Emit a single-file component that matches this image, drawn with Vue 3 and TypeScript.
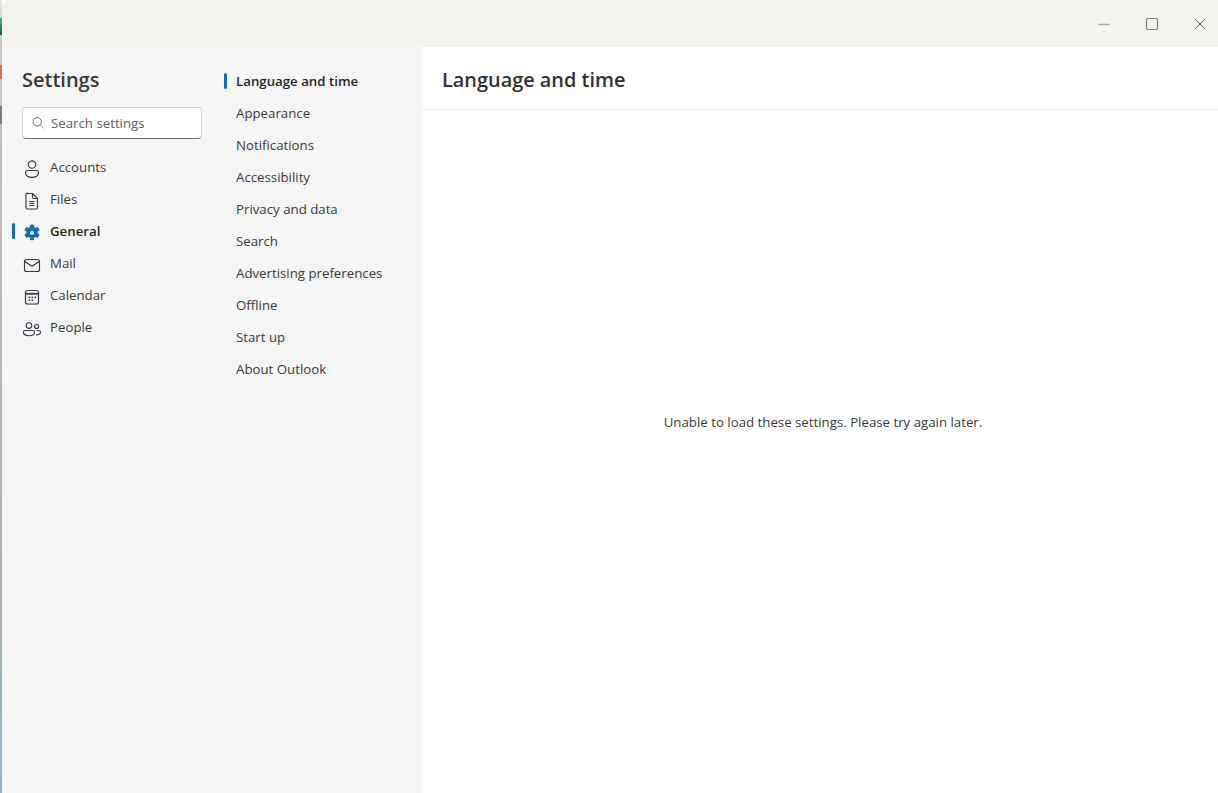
<script setup lang="ts">
interface Item { id: string; label: string }
const accounts: Item[] = [
  { id: 'accounts', label: 'Accounts' },
  { id: 'files', label: 'Files' },
  { id: 'general', label: 'General' },
  { id: 'mail', label: 'Mail' },
  { id: 'calendar', label: 'Calendar' },
  { id: 'people', label: 'People' },
]
const subItems: string[] = [
  'Language and time', 'Appearance', 'Notifications', 'Accessibility', 'Privacy and data',
  'Search', 'Advertising preferences', 'Offline', 'Start up', 'About Outlook',
]
</script>

<template>
  <div class="window">
    <div class="edge">
      <span class="e e1"></span>
      <span class="e e2"></span>
      <span class="e e3"></span>
    </div>
    <div class="frame">
      <header class="titlebar">
        <button class="cap"><svg width="14" height="14" viewBox="0 0 14 14"><path d="M1.500 7.500h11" stroke="#a9a9a9" stroke-width="1.500" fill="none"/></svg></button>
        <button class="cap"><svg width="14" height="14" viewBox="0 0 14 14"><rect x="1.500" y="1.500" width="11" height="11" rx="1.500" stroke="#7d7d7d" stroke-width="1.200" fill="none"/></svg></button>
        <button class="cap"><svg width="14" height="14" viewBox="0 0 14 14"><path d="M2 2l10 10M12 2L2 12" stroke="#6a6a6a" stroke-width="1" fill="none"/></svg></button>
      </header>
      <div class="body">
        <nav class="col1">
          <h1 class="settings">Settings</h1>
          <div class="search">
            <svg width="14" height="14" viewBox="0 0 14 14" class="mag"><circle cx="6.200" cy="5.800" r="4.200" stroke="#6b6b6b" stroke-width="1" fill="none"/><path d="M9.300 8.900l3.400 3.600" stroke="#b98a6a" stroke-width="1" fill="none"/></svg>
            <span>Search settings</span>
          </div>
          <ul class="list1">
            <li v-for="it in accounts" :key="it.id" class="row1" :class="{ active: it.id === 'general' }">
              <span v-if="it.id === 'general'" class="bar1"></span>
              <svg class="ico" width="20" height="20" viewBox="0 0 20 20" fill="none" stroke="#3a3548" stroke-width="1.150">
                <template v-if="it.id === 'accounts'">
                  <circle cx="10" cy="5.500" r="3.700"/>
                  <path d="M5.500 11.500h9a2 2 0 0 1 2 2v.6c0 2.500-3 4.300-6.500 4.300s-6.500-1.800-6.500-4.300v-.6a2 2 0 0 1 2-2z"/>
                </template>
                <template v-else-if="it.id === 'files'">
                  <path d="M5.500 2.500h5l5 5v9a1.500 1.500 0 0 1-1.500 1.500h-8.500a1.500 1.500 0 0 1-1.500-1.500v-13a1.500 1.500 0 0 1 1.500-1.500z"/>
                  <path d="M10.500 2.500v3.500a1.500 1.500 0 0 0 1.500 1.500h3.500M7.500 10.500h5M7.500 12.500h5M7.500 14.500h5"/>
                </template>
                <template v-else-if="it.id === 'general'">
                  <path fill="#0f6cbd" stroke="none" fill-rule="evenodd" d="M8.200 1.800a8.500 8.500 0 0 1 3.600 0l.4 2.200a1 1 0 0 0 1.400.7l2-.8a8.500 8.500 0 0 1 1.900 3.300l-1.600 1.400a1 1 0 0 0 0 1.600l1.600 1.400a8.500 8.500 0 0 1-1.900 3.300l-2-.8a1 1 0 0 0-1.400.7l-.4 2.200a8.500 8.500 0 0 1-3.600 0l-.4-2.200a1 1 0 0 0-1.400-.7l-2 .8a8.500 8.500 0 0 1-1.900-3.300l1.600-1.400a1 1 0 0 0 0-1.600l-1.600-1.400a8.500 8.500 0 0 1 1.900-3.300l2 .8a1 1 0 0 0 1.400-.7zM10 7.900a2.100 2.100 0 1 0 0 4.200 2.100 2.100 0 0 0 0-4.200z"/>
                </template>
                <template v-else-if="it.id === 'mail'">
                  <rect x="2.500" y="4.500" width="15" height="12" rx="2"/>
                  <path d="M2.800 6.500l7.200 4.800 7.200-4.800"/>
                </template>
                <template v-else-if="it.id === 'calendar'">
                  <rect x="3.500" y="3.500" width="13" height="13.500" rx="2"/>
                  <path stroke-width="1.800" d="M3.500 6.800h13"/>
                  <path stroke-width="1.500" stroke-dasharray="1.500 1.500" d="M6.500 10.300h7.500M6.500 13.300h4.500"/>
                </template>
                <template v-else>
                  <circle cx="7" cy="6.500" r="2.800"/>
                  <circle cx="14.600" cy="7.500" r="2"/>
                  <path d="M3 11.500h8a1.500 1.500 0 0 1 1.500 1.500v.5c0 2-2.500 3.200-5.500 3.200s-5.500-1.200-5.500-3.200V13a1.500 1.500 0 0 1 1.500-1.500zM14 15.800c2.500.3 4.500-.8 4.500-2.600a1.700 1.700 0 0 0-1.700-1.700h-2.300"/>
                </template>
              </svg>
              <span>{{ it.label }}</span>
            </li>
          </ul>
        </nav>
        <nav class="col2">
          <ul class="list2">
            <li v-for="(s, i) in subItems" :key="s" class="row2" :class="{ active: i === 0 }">
              <span v-if="i === 0" class="bar2"></span>{{ s }}
            </li>
          </ul>
        </nav>
        <main class="content">
          <h2 class="title">Language and time</h2>
          <div class="empty">Unable to load these settings. Please try again later.</div>
        </main>
      </div>
    </div>
  </div>
</template>

<style>
html, body { margin: 0; height: 100%; overflow: hidden; background: #fff; }
</style>

<style scoped>
.window {
  width: 1218px; height: 793px; display: flex; overflow: hidden;
  font-family: "Open Sans", "Noto Sans", sans-serif; color: #3b3a39; font-size: 13.25px;
}
ul { list-style: none; margin: 0; padding: 0; }
.edge { width: 2px; flex: none; background: linear-gradient(180deg, #e8e8e8 0, #c4c4c4 40px, #b4b4b4 420px, #a3b3ba 640px, #8fb4c6 793px); position: relative; }
.e { position: absolute; left: 0; width: 2px; display: block; }
.e1 { top: 18px; height: 17px; background: linear-gradient(180deg, #3fae7c, #14633f); }
.e2 { top: 65px; height: 14px; background: #d9714f; }
.e3 { top: 106px; height: 18px; background: #7a7a7a; }
.frame { flex: 1; display: flex; flex-direction: column; min-width: 0; border-top-left-radius: 8px; background: #f3f2f1; }
.titlebar { height: 47px; flex: none; display: flex; justify-content: flex-end; gap: 12px; background: #f4f2ef; border-top-left-radius: 8px; }
.cap { width: 36px; height: 47px; border: 0; background: none; padding: 0; display: flex; align-items: center; justify-content: center; }
.body { flex: 1; display: flex; min-height: 0; }
.col1 { width: 220px; flex: none; background: #f5f5f5; box-sizing: border-box; border-right: 1px solid #f0f0f0; }
.settings { margin: 19px 0 0 20px; font-size: 20px; line-height: 28px; font-weight: 600; color: #3b3a39; }
.search { margin: 13px 0 0 20px; width: 180px; height: 32px; box-sizing: border-box; background: #fff; border: 1px solid #d1d1d1; border-bottom-color: #666; border-radius: 4px; display: flex; align-items: center; padding-left: 8px; gap: 6px; color: #616161; }
.mag { flex: none; }
.list1 { margin-top: 12px; }
.row1 { height: 32px; display: flex; align-items: center; position: relative; padding-left: 20px; gap: 8px; }
.row1.active { font-weight: 600; color: #242424; }
.ico { flex: none; margin-top: 3px; }
.bar1 { position: absolute; left: 10px; top: 8px; width: 3px; height: 16px; border-radius: 2px; background: #0f6cbd; }
.col2 { width: 200px; flex: none; background: #f5f5f5; box-sizing: border-box; padding-top: 18px; }
.row2 { height: 32px; line-height: 32px; padding-left: 14px; position: relative; }
.row2.active { font-weight: 600; color: #242424; }
.bar2 { position: absolute; left: 2px; top: 8px; width: 3px; height: 16px; border-radius: 2px; background: #0f6cbd; }
.content { flex: 1; min-width: 0; background: #fff; display: flex; flex-direction: column; }
.title { margin: 0; height: 63px; box-sizing: border-box; padding: 19px 0 0 20px; font-size: 19.9px; line-height: 28px; font-weight: 600; color: #323130; border-bottom: 1px solid #edebe9; }
.empty { flex: 1; display: flex; align-items: center; justify-content: center; padding-bottom: 60px; padding-left: 6px; }
</style>
